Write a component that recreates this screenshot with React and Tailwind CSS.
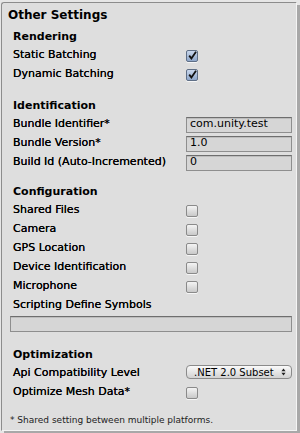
import React from 'react';

const font = { fontFamily: '"DejaVu Sans", Verdana, sans-serif' };

function Checkbox({ checked }) {
    return (
        <div
            className={`w-[12px] h-[12px] rounded-[2px] border flex items-center justify-center shadow-[0_1px_0_#f6f6f6] ${checked ? 'border-[#5f6f86] bg-gradient-to-b from-[#c9d7ec] to-[#8ea6c9]' : 'border-[#8a8a8a] bg-gradient-to-b from-[#f4f4f4] to-[#c9c9c9]'}`}
        >
            {checked && (
                <svg width="9" height="9" viewBox="0 0 9 9" className="-mt-[1px]">
                    <path d="M1.2 4.6 L3.4 7.4 L8 0.8" fill="none" stroke="#111" strokeWidth="1.8" />
                </svg>
            )}
        </div>
    );
}

function TextField({ value, wide }) {
    return (
        <div
            className={`${wide ? 'w-[282px]' : 'w-[106px]'} h-[16px] border border-[#8e8e8e] border-t-[#6e6e6e] bg-[#d6d6d6] shadow-[inset_0_1px_0_#bdbdbd] flex items-center pl-[3px] text-[11px] text-black`}
        >
            {value}
        </div>
    );
}

function Row({ label, children }) {
    return (
        <div className="h-[19px] flex items-center pl-[11px]">
            <div className="w-[173px] text-[11px] text-black whitespace-nowrap [text-shadow:0_0_0.4px_#000]">{label}</div>
            {children}
        </div>
    );
}

function Header({ children, className = '' }) {
    return (
        <div className={`h-[18px] flex items-center pl-[11px] text-[11px] font-bold text-black ${className}`}>
            {children}
        </div>
    );
}

export default function App() {
    return (
        <div className="w-[300px] h-[433px] bg-[#e6e6e6] overflow-hidden" style={font}>
            <div className="ml-[1px] mt-[2px] w-[296px] h-[429px] rounded-tl-[3px] border-t border-l border-[#8c8c8c] border-r border-b border-r-[#f4f4f4] border-b-[#f4f4f4] bg-[#dedede] shadow-[3px_3px_0_#a8a8a8]">
                {/* Title */}
                <div className="h-[24px] flex items-center pl-[6px] text-[12px] font-bold text-black">Other Settings</div>

                <Header className="mt-[1px]">Rendering</Header>
                <Row label="Static Batching"><Checkbox checked /></Row>
                <Row label="Dynamic Batching"><Checkbox checked /></Row>

                <Header className="mt-[13px]">Identification</Header>
                <Row label="Bundle Identifier*"><TextField value="com.unity.test" /></Row>
                <Row label="Bundle Version*"><TextField value="1.0" /></Row>
                <Row label="Build Id (Auto-Incremented)"><TextField value="0" /></Row>

                <Header className="mt-[11px]">Configuration</Header>
                <Row label="Shared Files"><Checkbox /></Row>
                <Row label="Camera"><Checkbox /></Row>
                <Row label="GPS Location"><Checkbox /></Row>
                <Row label="Device Identification"><Checkbox /></Row>
                <Row label="Microphone"><Checkbox /></Row>
                <Row label="Scripting Define Symbols" />
                <div className="mt-[1px] pl-[8px]">
                    <TextField value="" wide />
                </div>

                <Header className="mt-[14px]">Optimization</Header>
                <Row label="Api Compatibility Level">
                    <div className="w-[106px] h-[14px] -mt-[3px] rounded-[4px] border border-[#8a8a8a] bg-gradient-to-b from-[#fafafa] to-[#d2d2d2] flex items-center pl-[7px] pr-[5px] text-[10px] text-black">
                        <span className="flex-1">.NET 2.0 Subset</span>
                        <svg width="5" height="8" viewBox="0 0 5 8">
                            <path d="M2.5 0.5 L4.6 3.2 L0.4 3.2 Z M2.5 7.5 L4.6 4.8 L0.4 4.8 Z" fill="#222" />
                        </svg>
                    </div>
                </Row>
                <Row label="Optimize Mesh Data*"><Checkbox /></Row>

                <div className="mt-[12px] pl-[8px] text-[9px] text-[#222]">* Shared setting between multiple platforms.</div>
            </div>
        </div>
    );
}
